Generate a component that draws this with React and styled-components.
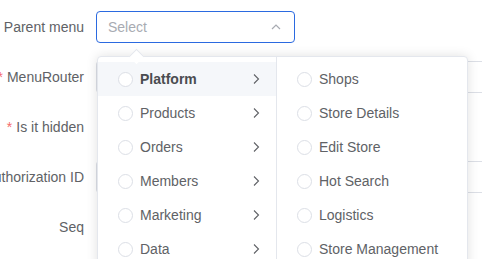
import React from 'react';
import styled, { createGlobalStyle } from 'styled-components';

const GlobalStyle = createGlobalStyle`
  html, body {
    margin: 0;
    padding: 0;
    background: #fff;
    font-family: "Liberation Sans", Arial, sans-serif;
    overflow: hidden;
  }
`;

const Page = styled.div`
  position: relative;
  width: 482px;
  height: 259px;
  overflow: hidden;
  padding-top: 11px;
  box-sizing: border-box;
`;

const FormItem = styled.div`
  display: flex;
  align-items: center;
  height: 32px;
  margin-bottom: 18px;
`;

const Label = styled.label`
  flex: 0 0 84px;
  width: 84px;
  min-width: 0;
  display: flex;
  justify-content: flex-end;
  white-space: nowrap;
  font-size: 14px;
  color: #606266;
  margin-right: 12px;
`;

const Star = styled.span`
  color: #f56c6c;
  margin-right: 4px;
`;

const Control = styled.div`
  flex: 1;
  display: flex;
  align-items: center;
  height: 100%;
`;

const SelectBox = styled.div`
  width: 199px;
  height: 32px;
  box-sizing: border-box;
  border: 1px solid #2b6ae0;
  border-radius: 4px;
  display: flex;
  align-items: center;
  justify-content: space-between;
  padding: 0 11px;
  font-size: 14px;
  color: #a8abb2;
`;

const TextInput = styled.div`
  width: 100%;
  height: 32px;
  box-sizing: border-box;
  border: 1px solid #dcdfe6;
  border-right: none;
  border-radius: 4px 0 0 4px;
`;

const Dropdown = styled.div`
  position: absolute;
  left: 97px;
  top: 56px;
  display: flex;
  background: #fff;
  border: 1px solid #e4e7ed;
  border-radius: 4px;
  box-shadow: 0 0 12px rgba(0, 0, 0, 0.12);
`;

const Arrow = styled.div`
  position: absolute;
  left: 33px;
  top: -6px;
  width: 10px;
  height: 10px;
  background: #fff;
  border-left: 1px solid #e4e7ed;
  border-top: 1px solid #e4e7ed;
  transform: rotate(45deg);
`;

const Panel = styled.ul`
  list-style: none;
  margin: 0;
  padding: 5px 0;
  width: ${(p) => p.width}px;
  height: 220px;
  box-sizing: border-box;
  border-right: ${(p) => (p.last ? 'none' : '1px solid #e4e7ed')};
`;

const Node = styled.li`
  display: flex;
  align-items: center;
  height: 34px;
  padding: 0 14px 0 20px;
  font-size: 14px;
  color: ${(p) => (p.active ? '#4a4c50' : '#606266')};
  font-weight: ${(p) => (p.active ? 700 : 400)};
  background: ${(p) => (p.active ? '#f5f7fa' : 'transparent')};
`;

const Radio = styled.span`
  width: 15px;
  height: 15px;
  box-sizing: border-box;
  border: 1px solid #dcdfe6;
  border-radius: 50%;
  background: #fff;
  margin-right: 7px;
  flex-shrink: 0;
`;

const NodeLabel = styled.span`
  flex: 1;
  white-space: nowrap;
`;

const Chevron = () => (
  <svg width="12" height="12" viewBox="0 0 12 12" fill="none">
    <path d="M4 1.5 L8.5 6 L4 10.5" stroke="#606266" strokeWidth="1.1" />
  </svg>
);

const Caret = () => (
  <svg width="14" height="14" viewBox="0 0 14 14" fill="none">
    <path d="M3 9 L7 5 L11 9" stroke="#a8abb2" strokeWidth="1.2" />
  </svg>
);

const first = ['Platform', 'Products', 'Orders', 'Members', 'Marketing', 'Data'];
const second = ['Shops', 'Store Details', 'Edit Store', 'Hot Search', 'Logistics', 'Store Management'];

const App = () => (
  <Page>
    <GlobalStyle />
    <FormItem>
      <Label>Parent menu</Label>
      <Control>
        <SelectBox>
          <span>Select</span>
          <Caret />
        </SelectBox>
      </Control>
    </FormItem>
    <FormItem>
      <Label><Star>*</Star>MenuRouter</Label>
      <Control><TextInput /></Control>
    </FormItem>
    <FormItem>
      <Label><Star>*</Star>Is it hidden</Label>
      <Control />
    </FormItem>
    <FormItem>
      <Label>Authorization ID</Label>
      <Control><TextInput /></Control>
    </FormItem>
    <FormItem>
      <Label>Seq</Label>
      <Control />
    </FormItem>

    <Dropdown>
      <Arrow />
      <Panel width={179}>
        {first.map((name, i) => (
          <Node key={name} active={i === 0}>
            <Radio />
            <NodeLabel>{name}</NodeLabel>
            <Chevron />
          </Node>
        ))}
      </Panel>
      <Panel width={190} last>
        {second.map((name) => (
          <Node key={name}>
            <Radio />
            <NodeLabel>{name}</NodeLabel>
          </Node>
        ))}
      </Panel>
    </Dropdown>
  </Page>
);

export default App;
